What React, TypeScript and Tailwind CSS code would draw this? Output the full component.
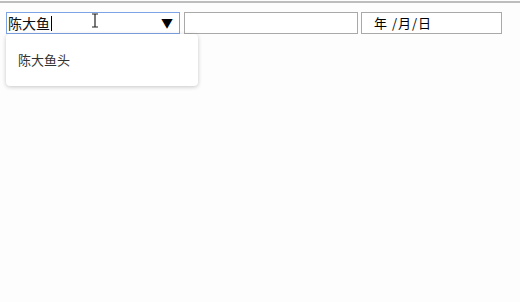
import { useState } from 'react';

const cjk = "font-['Microsoft_YaHei','Noto_Sans_CJK_SC',sans-serif]";

export default function App() {
  const [name, setName] = useState('陈大鱼');
  const [open] = useState(true);

  return (
    <div className={`min-h-[302px] bg-[#fdfdfd] ${cjk}`}>
      <div className="h-px" />
      <div className="h-[2px] bg-[#bdbdbd]" />
      <div className="flex pl-[6px] pt-[9px]">
        <div className="relative">
          <div className="flex h-[22px] w-[174px] items-center border border-[#7fa4e6] bg-white pl-[1px] pr-[6px]">
            <input
              value={name}
              onChange={(e) => setName(e.target.value)}
              className="h-full w-full bg-transparent text-[14px] leading-none text-[#111] outline-none"
            />
            <span className="text-[12px] leading-none text-black">▼</span>
          </div>
          {/* caret */}
          <div className="absolute left-[45px] top-[4px] h-[15px] w-px bg-black" />
          {/* text cursor */}
          <svg className="absolute left-[84px] top-[1px]" width="10" height="15" viewBox="0 0 10 15">
            <path d="M2 1h6M5 1v13M2 14h6" stroke="#222" strokeWidth="1.2" fill="none" />
          </svg>
          {open && (
            <div className="absolute left-0 top-[22px] z-10 flex h-[52px] w-[192px] items-center rounded-[4px] bg-white pl-[12px] shadow-[0_1px_4px_rgba(0,0,0,0.22)]">
              <span className="text-[13px] text-[#333]">陈大鱼头</span>
            </div>
          )}
        </div>
        <input
          type="text"
          className="ml-[4px] h-[22px] w-[174px] border border-[#a9a9a9] bg-white outline-none"
        />
        <div className="ml-[3px] flex h-[22px] w-[141px] items-center border border-[#a9a9a9] bg-white pl-[12px] text-[13px] tracking-[1px] text-black">
          <span className="whitespace-pre">年 /月/日</span>
        </div>
      </div>
    </div>
  );
}
